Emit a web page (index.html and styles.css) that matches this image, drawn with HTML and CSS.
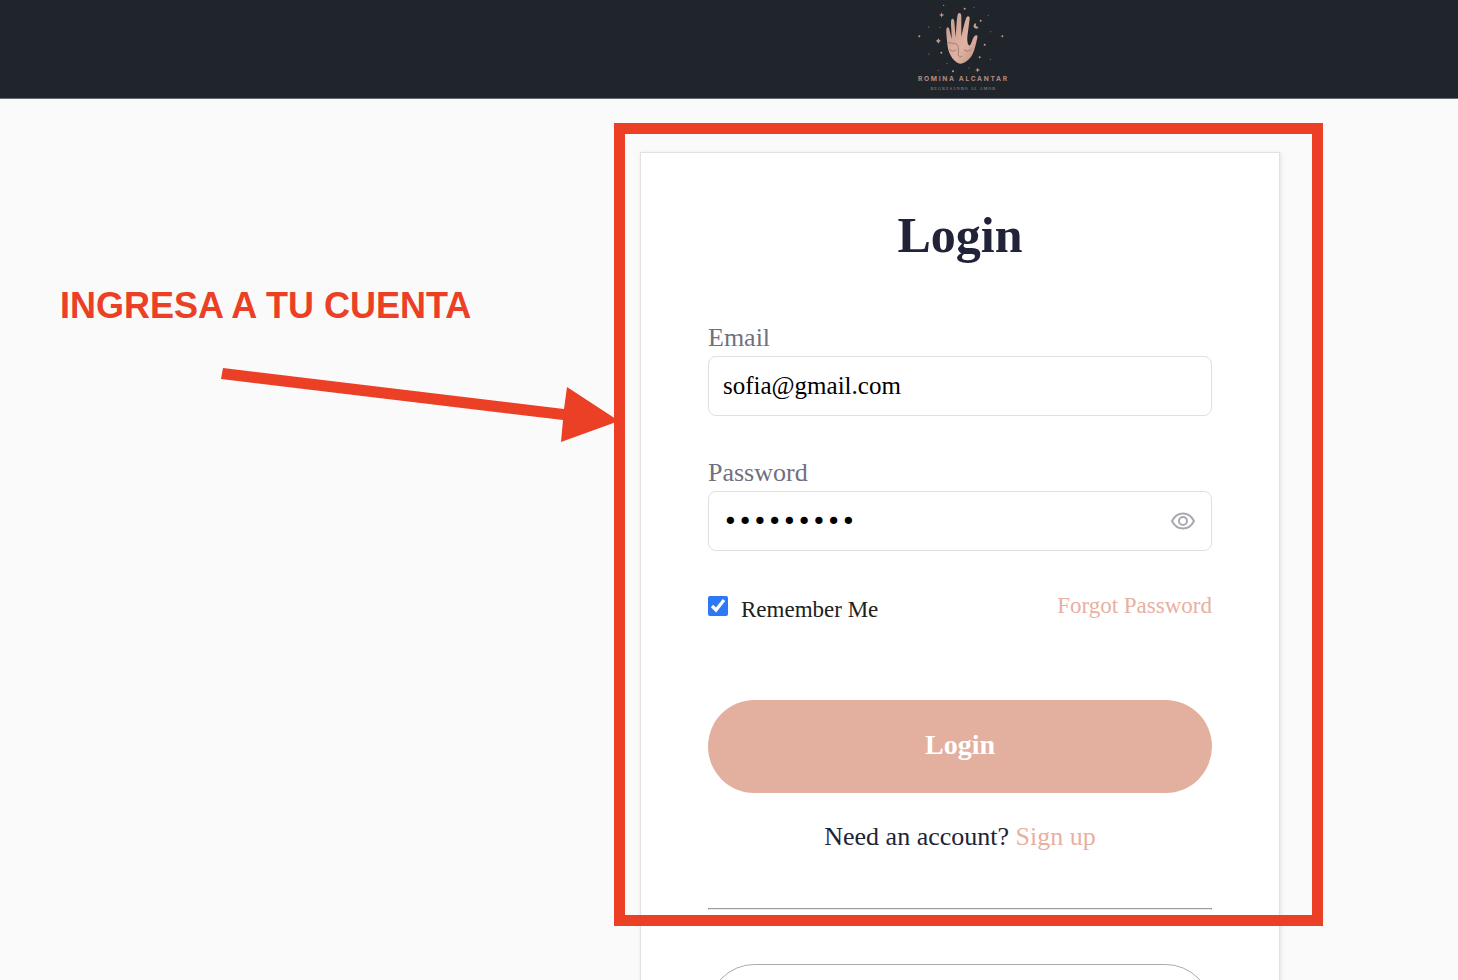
FILE: index.html
```html
<!DOCTYPE html>
<html lang="es">
<head>
    <meta charset="UTF-8">
    <meta name="viewport" content="width=device-width, initial-scale=1.0">
    <title>Login</title>
    <link rel="stylesheet" href="styles.css">
</head>
<body>
    <header class="header columns">
        <a class="logo" href="#">
            <svg width="124" height="98" viewBox="-6 0 372 294" role="img" aria-label="Romina Alcantar">
                <defs>
                    <linearGradient id="skin" x1="0" y1="0" x2="1" y2="1">
                        <stop offset="0" stop-color="#c99a8c"/>
                        <stop offset="0.6" stop-color="#dfb3a3"/>
                        <stop offset="1" stop-color="#c08f80"/>
                    </linearGradient>
                </defs>
                <!-- hand -->
                <path fill="url(#skin)" d="M143 140C141 120 137 90 140 84C144 78 148 84 149 92L155 117C156 100 151 66 154 59C158 53 163 58 163 66L167 112C169 90 170 50 174 41C178 36 184 40 184 48L184 112C187 95 195 60 200 51C205 46 210 50 209 56L202 110C201 125 204 138 210 136C216 128 218 112 225 107C231 104 234 107 232 113C228 130 224 155 212 172C202 184 190 191 181 191C165 189 146 165 143 140Z"/>
                <!-- face -->
                <g fill="none" stroke="#8d6359" stroke-width="2">
                    <path d="M144 127C158 132 173 127 175 142C177 153 173 162 176 168C179 172 184 171 187 168"/>
                    <path d="M147 147Q158 158 169 149"/>
                    <path d="M192 149Q203 158 214 148"/>
                </g>
                <!-- moon and stars -->
                <g fill="#c69a8c">
                    <path d="M229 70A8 8 0 1 0 236 81A7 7 0 0 1 229 70Z"/>
                    <path d="M125 37L127 43L133 45L127 47L125 53L123 47L117 45L123 43Z"/>
                    <path d="M115 115L118 120L123 123L118 125L115 131L112 125L107 123L112 120Z"/>
                    <path d="M233 203L235 208L240 210L235 212L233 217L231 212L226 210L231 208Z"/>
                    <circle cx="58" cy="109" r="3"/>
                    <circle cx="307" cy="109" r="3"/>
                    <circle cx="254" cy="134" r="3"/>
                    <circle cx="239" cy="172" r="3"/>
                    <circle cx="159" cy="214" r="3"/>
                    <circle cx="124" cy="158" r="3"/>
                    <circle cx="131" cy="16" r="2"/>
                    <circle cx="194" cy="26" r="3"/>
                    <circle cx="242" cy="62" r="3"/>
                </g>
                <g fill="#7d6560">
                    <circle cx="222" cy="22" r="2"/>
                    <circle cx="265" cy="46" r="2"/>
                    <circle cx="272" cy="95" r="2"/>
                    <circle cx="271" cy="178" r="2"/>
                    <circle cx="86" cy="81" r="2"/>
                    <circle cx="120" cy="82" r="2"/>
                    <circle cx="87" cy="162" r="2"/>
                    <circle cx="141" cy="190" r="2"/>
                    <circle cx="115" cy="211" r="2"/>
                    <circle cx="207" cy="204" r="2"/>
                </g>
                <text class="logo-name" x="190" y="243" text-anchor="middle">ROMINA ALCANTAR</text>
                <text class="logo-tagline" x="190" y="269" text-anchor="middle">REGRESANDO AL AMOR</text>
            </svg>
        </a>
    </header>

    <main class="page columns">
        <aside class="note">
            <p class="note-text">INGRESA A TU CUENTA</p>
            <svg class="note-arrow" width="400" height="74" viewBox="0 0 400 74" aria-hidden="true">
                <path fill="#eb4026" d="M2 0L343 41L346 19L398 53L340 74L342 52L0 11Z"/>
            </svg>
        </aside>

        <section class="card">
            <div class="card-main">
                <h1 class="title">Login</h1>
                <form>
                    <div class="field">
                        <label for="email">Email</label>
                        <input class="text-input" type="email" id="email" value="sofia@gmail.com">
                    </div>
                    <div class="field">
                        <label for="password">Password</label>
                        <div class="password-box">
                            <input class="text-input password-input" type="password" id="password" value="contrasen">
                            <button class="eye" type="button" aria-label="Show password">
                                <svg width="26" height="20" viewBox="0 0 26 20" fill="none" stroke="#a9a9b2" stroke-width="2">
                                    <path d="M2 10C7 0 19 0 24 10C19 20 7 20 2 10Z"/>
                                    <circle cx="13" cy="10" r="4"/>
                                </svg>
                            </button>
                        </div>
                    </div>
                    <div class="options">
                        <div class="remember">
                            <input type="checkbox" id="remember" checked>
                            <label for="remember">Remember Me</label>
                        </div>
                        <a class="forgot" href="#">Forgot Password</a>
                    </div>
                    <button class="login-button" type="submit">Login</button>
                </form>
                <p class="signup">Need an account? <a href="#">Sign up</a></p>
                <hr class="divider">
                <div class="frame"></div>
            </div>
            <button class="outline-button" type="button" aria-label="Sign up"></button>
        </section>
    </main>
</body>
</html>
```
FILE: styles.css
```css
* {
    margin: 0;
    padding: 0;
    box-sizing: border-box;
}

body {
    display: flex;
    flex-direction: column;
    height: 100vh;
    overflow: hidden;
    background: #fafafa;
    color: #212121;
    font-family: "Liberation Serif", serif;
}

a {
    color: #e8b09f;
    text-decoration: none;
}

.columns {
    display: grid;
    grid-template-columns: 640fr 640fr 178fr;
}

.header {
    flex-shrink: 0;
    background: #1f252a;
    border-bottom: 1px solid #66696d;
}

.logo {
    grid-column: 2;
    justify-self: center;
}

.logo svg {
    display: block;
}

.logo-name {
    fill: #b58c80;
    font: bold 20px Inter, sans-serif;
    letter-spacing: 5px;
}

.logo-tagline {
    fill: #8d7069;
    font: bold 12px "Liberation Serif", serif;
    letter-spacing: 3px;
}

.page {
    padding-top: 53px;
}

.note {
    padding: 132px 0 0 60px;
}

.note-text {
    color: #eb4026;
    font: bold 36px/44px "Liberation Sans", sans-serif;
    white-space: nowrap;
}

.note-arrow {
    display: block;
    margin: 40px 0 0 161px;
}

.card {
    padding: 52px 67px;
    background: white;
    border: 1px solid #e2e2e2;
    box-shadow: 1px 1px 4px rgba(0,0,0,0.1);
}

.title {
    margin-bottom: 57px;
    color: #212338;
    font-size: 50px;
    line-height: 60px;
    text-align: center;
}

.field {
    margin-bottom: 41px;
}

.field label {
    display: block;
    margin-bottom: 2px;
    color: #6f7080;
    font-size: 26px;
    line-height: 32px;
}

.text-input {
    display: block;
    width: 100%;
    height: 60px;
    padding: 0 14px;
    background: white;
    border: 1px solid #dfdfe6;
    border-radius: 8px;
    color: black;
    font-family: inherit;
    font-size: 25px;
}

.password-input {
    font-family: "DejaVu Sans", sans-serif;
}

.password-box {
    position: relative;
}

.eye {
    position: absolute;
    top: 20px;
    right: 16px;
    background: none;
    border: none;
}

.eye svg {
    display: block;
}

.options {
    display: flex;
    justify-content: space-between;
    align-items: flex-start;
    font-size: 23px;
    line-height: 28px;
}

.remember {
    display: flex;
    align-items: flex-start;
    gap: 13px;
}

.remember input {
    width: 20px;
    height: 20px;
    margin-top: 4px;
    accent-color: #2d78f6;
}

.remember label {
    padding-top: 4px;
}

.login-button {
    display: block;
    width: 100%;
    height: 93px;
    margin-top: 76px;
    padding-bottom: 4px;
    background: #e3b09f;
    border: none;
    border-radius: 47px;
    color: white;
    font-family: inherit;
    font-size: 28px;
    font-weight: bold;
}

.signup {
    margin-top: 28px;
    color: #212338;
    font-size: 26px;
    line-height: 32px;
    text-align: center;
}

.divider {
    margin-top: 55px;
    border: 1px solid #999;
    border-bottom-color: #eee;
}

.card-main {
    position: relative;
}

/* red highlight around the login form */
.frame {
    position: absolute;
    top: -82px;
    right: -111px;
    bottom: -16px;
    left: -94px;
    border: 11px solid #eb4026;
    pointer-events: none;
}

.outline-button {
    display: block;
    width: 100%;
    height: 93px;
    margin-top: 54px;
    background: white;
    border: 1px solid #aaa;
    border-radius: 47px;
}
```
